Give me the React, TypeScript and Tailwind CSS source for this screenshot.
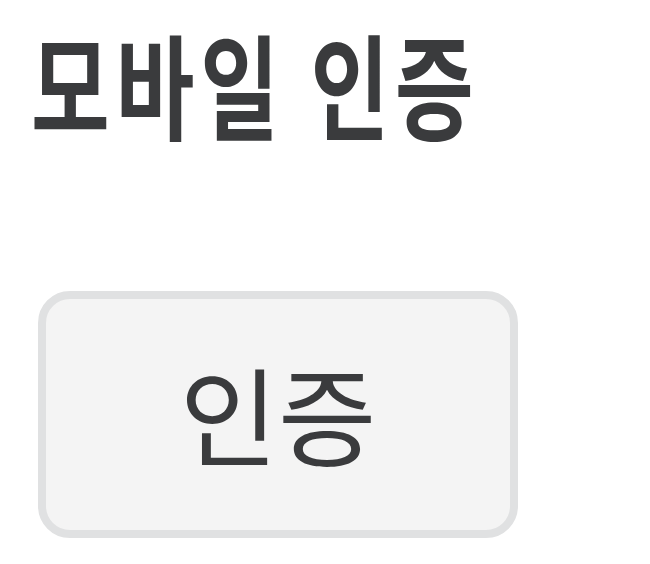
export default function App() {
  return (
    <div
      className="min-h-[564px] w-[650px] bg-white text-[#3a3b3d]"
      style={{ fontFamily: '"Noto Sans CJK KR", "Noto Sans", sans-serif' }}
    >
      <div className="flex flex-col items-start px-[38px] pt-[12px]">
        <h1 className="-ml-[7px] origin-left scale-x-[0.75] whitespace-nowrap text-[114px] font-bold leading-[140px] tracking-[8px]">
          모바일 인증
        </h1>
        <button className="mt-[139px] flex h-[247px] w-[480px] items-center justify-center rounded-[32px] border-[8px] border-[#e0e1e2] bg-[#f4f4f4] pb-[6px] text-[107px] leading-none text-[#3a3b3d]">
          인증
        </button>
      </div>
    </div>
  );
}
